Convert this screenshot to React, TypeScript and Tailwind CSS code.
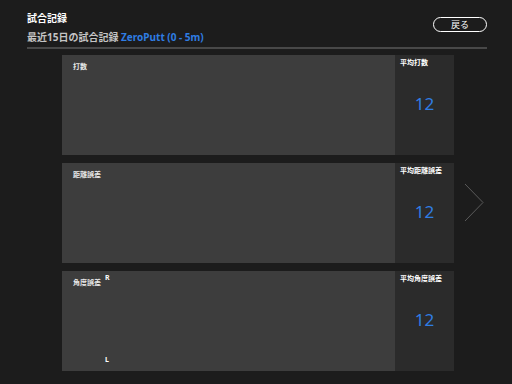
import { ReactNode } from 'react';

const FONT = { fontFamily: '"Noto Sans", "Noto Sans CJK JP", sans-serif' };

function ChartCard({ label, avgLabel, value, children }: { label: string; avgLabel: string; value: string; children?: ReactNode }) {
  return (
    <div className="flex h-[100px] w-[392px]">
      <div className="relative flex-1 bg-[#3d3d3d] pl-[11px] pt-[7px]">
        <div className="text-[7px] font-bold leading-[10px] text-[#e8e8e8]">{label}</div>
        {children}
      </div>
      <div className="flex w-[59px] flex-col bg-[#2b2b2b] pl-[5px] pt-[3px]">
        <div className="whitespace-nowrap text-[7px] font-bold leading-[10px] text-white">{avgLabel}</div>
        <div className="flex flex-1 items-center justify-center pr-[5px] pb-[16px] text-[17px] leading-none text-[#2f7de3]">{value}</div>
      </div>
    </div>
  );
}

export default function App() {
  return (
    <div className="relative h-[384px] w-[512px] overflow-hidden bg-[#1c1c1c]" style={FONT}>
      <div className="flex items-start justify-between pl-[27px] pr-[25px] pt-[12px]">
        <div>
          <div className="text-[10px] font-bold leading-[13px] text-white">試合記録</div>
          <div className="mt-[5px] text-[10px] font-bold leading-[14px] text-[#c4c4c4]">
            最近15日の試合記録 <span className="text-[#2f7de3]">ZeroPutt (0 - 5m)</span>
          </div>
        </div>
        <button className="mt-[5px] flex h-[15px] w-[54px] items-center justify-center rounded-full border-[1.5px] border-white text-[9px] leading-none text-white">
          戻る
        </button>
      </div>
      <div className="mx-[27px] mt-[3px] h-[2px] w-[460px] bg-[#484848]" />
      <div className="flex">
        <div className="ml-[62px] mt-[6px] flex flex-col gap-[8px]">
          <ChartCard label="打数" avgLabel="平均打数" value="12" />
          <ChartCard label="距離誤差" avgLabel="平均距離誤差" value="12" />
          <ChartCard label="角度誤差" avgLabel="平均角度誤差" value="12">
            <span className="absolute left-[43px] top-[2px] text-[7px] font-bold text-white">R</span>
            <span className="absolute left-[43px] top-[84px] text-[7px] font-bold text-white">L</span>
          </ChartCard>
        </div>
        <div className="ml-[10px] mt-[134px]">
          <svg width="20" height="40" viewBox="0 0 20 40">
            <polyline points="1,1 19,19.5 1,38" fill="none" stroke="#5a5a5a" strokeWidth="1" />
          </svg>
        </div>
      </div>
    </div>
  );
}
